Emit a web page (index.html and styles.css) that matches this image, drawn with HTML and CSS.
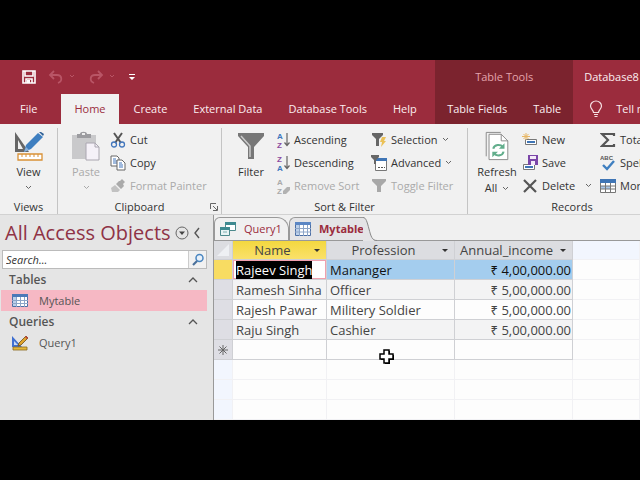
FILE: index.html
```html
<!DOCTYPE html>
<html lang="en">
<head>
    <meta charset="UTF-8">
    <meta name="viewport" content="width=device-width, initial-scale=1.0">
    <title>Database8</title>
    <link rel="stylesheet" href="styles.css">
</head>
<body>
    <div class="app">
        <header class="titlebar">
            <div class="title-main">
                <div class="quick-access">
                    <button class="qa-button" aria-label="Save"><svg width="14" height="14" viewBox="0 0 14 14"><path d="M1 1h12v12H1z M3 1v5h8V1 M4 13V9h6v4" fill="none" stroke="#fff" stroke-width="1.6"/><path d="M5 10h3v3H5z" fill="#fff"/></svg></button>
                    <button class="qa-button faded" aria-label="Undo"><svg width="28" height="14" viewBox="0 0 28 14"><path d="M6 1L2 5l4 4M2 5h7c5 0 6 6 1 8" fill="none" stroke="#b95566" stroke-width="1.8"/><path d="M22 5l2 2 2-2" fill="none" stroke="#b95566"/></svg></button>
                    <button class="qa-button faded" aria-label="Redo"><svg width="28" height="14" viewBox="0 0 28 14"><path d="M10 1l4 4-4 4M14 5H7C2 5 1 11 6 13" fill="none" stroke="#b95566" stroke-width="1.8"/><path d="M22 5l2 2 2-2" fill="none" stroke="#b95566"/></svg></button>
                    <button class="qa-button" aria-label="Customize"><svg width="8" height="8" viewBox="0 0 8 8"><path d="M1 1h6v1H1z M1 4h6L4 7z" fill="#fff"/></svg></button>
                </div>
                <nav class="tabs">
                    <button class="tab tab-file">File</button>
                    <button class="tab active">Home</button>
                    <button class="tab">Create</button>
                    <button class="tab">External Data</button>
                    <button class="tab">Database Tools</button>
                    <button class="tab">Help</button>
                </nav>
            </div>
            <div class="title-context">
                <div class="context-name">Table Tools</div>
                <nav class="tabs">
                    <button class="tab">Table Fields</button>
                    <button class="tab">Table</button>
                </nav>
            </div>
            <div class="title-end">
                <div class="file-name">Database8 : Database</div>
                <button class="tell-me">
                    <svg width="14" height="18" viewBox="0 0 14 18"><path d="M4.500 12.500C4.500 10 1.500 9 1.500 6a5.500 5 0 0 1 11 0c0 3-3 4-3 6.500z M5 14.500h4 M5.500 16.500h3" fill="none" stroke="#f6dfe2" stroke-width="1.200"/></svg>
                    Tell me what you want to do
                </button>
            </div>
        </header>

        <!-- ribbon -->
        <div class="ribbon">
            <section class="group group-views">
                <div class="group-body">
                    <button class="big">
                        <svg width="30" height="30" viewBox="0 0 30 30"><path d="M1 1v20h14z M4 9l5 9H4z" fill="#666" fill-rule="evenodd"/><path d="M10 21l2-7L24 2l5 4-12 12z" fill="#3f7fc0"/><path d="M25 1l4 4 1-2-3-2z" fill="#2d5f96"/><path d="M10 21l2-5 3 3z" fill="#8ab2dc"/><path d="M4 23h24v6H4z" fill="#fff" stroke="#d99136" stroke-width="1.300"/><path d="M8 23v3M12 23v3M16 23v3M20 23v3M24 23v3" stroke="#d99136"/></svg>
                        View
                        <svg class="chev" width="7" height="5" viewBox="0 0 7 5"><path d="M1 1l2.500 2.500L6 1"/></svg>
                    </button>
                </div>
                <div class="group-label">Views</div>
            </section>
            <section class="group group-clipboard">
                <div class="group-body">
                    <button class="big off">
                        <svg width="30" height="30" viewBox="0 0 30 30"><path d="M1 4h24v24H1z" fill="#c9c9cb"/><path d="M6 3h3c0-3 7-3 7 0h4v4H6z" fill="#9c9ca0"/><path d="M11 2h3v2h-3z" fill="#eee"/><path d="M15 12h9l4 4v13H15z" fill="#f5f1f8" stroke="#aaa6b0"/><path d="M24 12v4h4" fill="none" stroke="#aaa6b0"/></svg>
                        Paste
                        <svg class="chev" width="7" height="5" viewBox="0 0 7 5"><path d="M1 1l2.500 2.500L6 1"/></svg>
                    </button>
                    <div class="stack">
                        <button class="small"><svg width="16" height="16" viewBox="0 0 16 16"><path d="M4 1l7 10M12 1L5 11" stroke="#555" stroke-width="2"/><circle cx="4" cy="12.500" r="2.500" fill="none" stroke="#4377bd" stroke-width="1.300"/><circle cx="12" cy="12.500" r="2.500" fill="none" stroke="#4377bd" stroke-width="1.300"/></svg>Cut</button>
                        <button class="small"><svg width="16" height="16" viewBox="0 0 16 16"><path d="M1 1h6l2 2v8H1z" fill="#fff" stroke="#666"/><path d="M3 4h3M3 6h4M3 8h4" stroke="#4377bd"/><path d="M7 5h5l3 3v7H7z" fill="#fff" stroke="#666"/><path d="M9 8h3M9 10h4M9 12h4" stroke="#4377bd"/></svg>Copy</button>
                        <button class="small off"><svg width="16" height="16" viewBox="0 0 16 16"><path d="M10 3l2-2 3 3-2 2 1 2-3 3-5-5 3-3z" fill="#aaa"/><path d="M5 7l5 5-2 2-6 0-1-4z" fill="#c2c2c2"/></svg>Format Painter</button>
                    </div>
                </div>
                <div class="group-label">Clipboard
                    <button class="launcher" aria-label="Clipboard options"><svg width="8" height="8" viewBox="0 0 8 8"><path d="M.5 6V.5H6 M3 3l4 4 M7.500 3v4.500H3" fill="none" stroke="#666"/></svg></button>
                </div>
            </section>
            <section class="group group-sort">
                <div class="group-body">
                    <button class="big">
                        <svg width="28" height="30" viewBox="0 0 28 30"><path d="M1 2h26v3L17 16v12h-6V16L1 5z" fill="#777"/><path d="M4 5l9 10v11" fill="none" stroke="#ccc" stroke-width="1.500"/></svg>
                        Filter
                    </button>
                    <div class="stack">
                        <button class="small"><svg class="az" width="14" height="18" viewBox="0 0 14 18"><text x="1" y="8" fill="#3c76bd">A</text><text x="1" y="17" fill="#8a4aa0">Z</text><path d="M11 2v12M8.500 11.500l2.500 3 2.500-3" fill="none" stroke="#666" stroke-width="1.200"/></svg>Ascending</button>
                        <button class="small"><svg class="az" width="14" height="18" viewBox="0 0 14 18"><text x="1" y="8" fill="#8a4aa0">Z</text><text x="1" y="17" fill="#3c76bd">A</text><path d="M11 2v12M8.500 11.500l2.500 3 2.500-3" fill="none" stroke="#666" stroke-width="1.200"/></svg>Descending</button>
                        <button class="small off"><svg class="az" width="14" height="18" viewBox="0 0 14 18"><text x="1" y="8" fill="#aaa">A</text><text x="1" y="17" fill="#aaa">Z</text><path d="M7 14l4-4h3v3l-4 4H7z" fill="#b2b2b2"/></svg>Remove Sort</button>
                    </div>
                    <div class="stack">
                        <button class="small"><svg width="16" height="16" viewBox="0 0 16 16"><path d="M1 1h11v2L8 7v7H5V7L1 3z" fill="#666"/><path d="M11 5h4l-2 4h2l-5 6 1-5H9z" fill="#ebc157"/></svg>Selection<svg class="chev" width="7" height="5" viewBox="0 0 7 5"><path d="M1 1l2.500 2.500L6 1"/></svg></button>
                        <button class="small"><svg width="16" height="16" viewBox="0 0 16 16"><path d="M4.500 3.500h11v12h-11z" fill="#fff" stroke="#777"/><path d="M5 3h11v3H5z" fill="#3f75b5"/><path d="M7 12h2v1H7zM10 12h2v1h-2zM13 12h1v1h-1z" fill="#555"/><path d="M0 0h8v2L5 5v4H3V5L0 2z" fill="#666"/></svg>Advanced<svg class="chev" width="7" height="5" viewBox="0 0 7 5"><path d="M1 1l2.500 2.500L6 1"/></svg></button>
                        <button class="small off"><svg width="16" height="16" viewBox="0 0 16 16"><path d="M1 1h14v2l-5 5v6H6V8L1 3z" fill="#a8a8a8"/></svg>Toggle Filter</button>
                    </div>
                </div>
                <div class="group-label">Sort &amp; Filter</div>
            </section>
            <section class="group group-records">
                <div class="group-body">
                    <button class="big">
                        <svg width="26" height="32" viewBox="0 0 26 32"><path d="M1.500 27V1.500H17" fill="none" stroke="#888"/><path d="M4.500 3.500h13l7 7v20h-20z" fill="#fff" stroke="#888"/><path d="M17.500 3.500v7h7" fill="none" stroke="#888"/><path d="M9 19c1-5 8-5 10-2M20 22c-1 5-8 5-10 2" fill="none" stroke="#62ae8c" stroke-width="2.200"/><path d="M21 13v6h-6zM8 28v-6h6z" fill="#62ae8c"/></svg>
                        Refresh
                        <span class="big-line">All <svg class="chev" width="7" height="5" viewBox="0 0 7 5"><path d="M1 1l2.500 2.500L6 1"/></svg></span>
                    </button>
                    <div class="stack stack-records">
                        <button class="small"><svg width="16" height="16" viewBox="0 0 16 16"><path d="M3.500 7.500h11v5h-11z" fill="#fff" stroke="#777"/><path d="M5 9h8v2H5z" fill="#3f75b5"/><path d="M4 1v7M0 4.500h8M1.500 2l5 5M6.500 2l-5 5" stroke="#e8b765"/></svg>New</button>
                        <button class="small"><svg width="16" height="16" viewBox="0 0 16 16"><path d="M1.500 9.500h11v5h-11z" fill="#fff" stroke="#777"/><path d="M3 11h8v2H3z" fill="#3f75b5"/><path d="M6 0h10v10H6z" fill="#7b46a8"/><path d="M8 1h6v3H8zM9 6h4v4H9z" fill="#f3eaf8"/></svg>Save</button>
                        <button class="small"><svg width="16" height="16" viewBox="0 0 16 16"><path d="M2 2l12 12M14 2L2 14" stroke="#555" stroke-width="2.200"/></svg>Delete<svg class="chev chev-end" width="7" height="5" viewBox="0 0 7 5"><path d="M1 1l2.500 2.500L6 1"/></svg></button>
                    </div>
                    <div class="stack">
                        <button class="small"><svg width="16" height="16" viewBox="0 0 16 16"><path d="M14 4V2H2l6 6-6 6h12v-2" fill="none" stroke="#555" stroke-width="2.200"/></svg>Totals</button>
                        <button class="small"><svg class="abc" width="16" height="16" viewBox="0 0 16 16"><text x="0" y="5">ABC</text><path d="M3 10l4 4 7-8" fill="none" stroke="#3f7fc0" stroke-width="2.400"/></svg>Spelling</button>
                        <button class="small"><svg width="16" height="16" viewBox="0 0 16 16"><path d="M.5 1.500h15v13H.5z" fill="#fff" stroke="#777"/><path d="M0 1h16v4H0z" fill="#3f75b5"/><path d="M1 8h10v3H1z" fill="#a9c7e8"/><path d="M0 8h16M0 11h16M5.500 5v10M10.500 5v10" stroke="#777" fill="none"/></svg>More</button>
                    </div>
                </div>
                <div class="group-label">Records</div>
            </section>
        </div>

        <div class="workspace">
            <!-- navigation pane -->
            <aside class="nav-pane">
                <div class="nav-head">
                    <h1 class="nav-title">All Access Objects</h1>
                    <button class="icon-button" aria-label="Choose category"><svg width="14" height="14" viewBox="0 0 14 14"><circle cx="7" cy="7" r="6" fill="none" stroke="#666"/><path d="M4 5.500h6L7 9z" fill="#444"/></svg></button>
                    <button class="icon-button" aria-label="Collapse pane"><svg width="8" height="12" viewBox="0 0 8 12"><path d="M6 1L2 6l4 5" fill="none" stroke="#555" stroke-width="1.400"/></svg></button>
                </div>
                <div class="search">
                    <input class="search-input" type="text" placeholder="Search..." aria-label="Search">
                    <button class="search-button" aria-label="Find"><svg width="14" height="14" viewBox="0 0 14 14"><circle cx="8.500" cy="5" r="3.500" fill="#e8f1fa" stroke="#4a86c0" stroke-width="1.500"/><path d="M6 8l-4 4" stroke="#4a6f9a" stroke-width="2.200"/></svg></button>
                </div>
                <button class="nav-group">Tables<svg width="10" height="6" viewBox="0 0 10 6"><path d="M1 5l4-4 4 4" fill="none" stroke="#555" stroke-width="1.300"/></svg></button>
                <a class="nav-item selected" href="#mytable"><svg width="16" height="13" viewBox="0 0 16 13"><path d="M.5.5h15v12H.5z" fill="#fff" stroke="#4c6fa5"/><path d="M0 0h16v3H0z" fill="#4c79b8"/><path d="M1 3h3v9H1z" fill="#bcd0ea"/><path d="M0 6.500h16M0 9.500h16M4.500 3v10M8.500 3v10M12.500 3v10" stroke="#8ca5c8"/></svg>Mytable</a>
                <button class="nav-group">Queries<svg width="10" height="6" viewBox="0 0 10 6"><path d="M1 5l4-4 4 4" fill="none" stroke="#555" stroke-width="1.300"/></svg></button>
                <a class="nav-item" href="#query1"><svg width="18" height="16" viewBox="0 0 18 16"><path d="M1 1v11h10z" fill="#3f6fd0"/><path d="M3 6v4h4z" fill="#c9daf5"/><path d="M2 12h14v3H2z" fill="#e4b73c" stroke="#8a6a20" stroke-width=".8"/><path d="M7 11l1-3 7-7 2 2-7 7z" fill="#e0a42e" stroke="#6b4f1a" stroke-width=".8"/><path d="M14 2l1-1 2 2-1 1z" fill="#c03c3c"/></svg>Query1</a>
            </aside>

            <main class="document">
                <div class="doc-tabs">
                    <button class="doc-tab"><svg width="16" height="16" viewBox="0 0 16 16"><path d="M5.500 1.500h10v8h-10z" fill="#fff" stroke="#4d8a8c"/><path d="M5 1h11v3H5z" fill="#3f8a90"/><path d="M.5 6.500h9v8h-9z" fill="#e8f4f4" stroke="#4d8a8c"/><path d="M0 6h10v3H0z" fill="#3f8a90"/><path d="M3 11h4" stroke="#7fb0b0"/></svg>Query1</button>
                    <button class="doc-tab current"><svg width="16" height="14" viewBox="0 0 16 14"><path d="M.5.500h15v13H.5z" fill="#fff" stroke="#4c6fa5"/><path d="M0 0h16v3H0z" fill="#5b86c4"/><path d="M1 3h3v10H1z" fill="#bcd0ea"/><path d="M0 6.500h16M0 10h16M4.500 3v11M8.500 3v11M12.500 3v11" stroke="#8ca5c8"/></svg>Mytable<svg class="slant" width="14" height="24" viewBox="0 0 14 24"><path d="M0 0c3 0 4 4 6 12s3 12 8 12H0z" fill="#e4e4e6"/><path d="M0 .5c3 0 4 4 6 11.500s3 11.500 8 11.500" fill="none" stroke="#888"/></svg></button>
                </div>
                <table class="sheet" id="mytable">
                    <colgroup>
                        <col class="col-mark"><col class="col-name"><col class="col-job"><col class="col-income"><col>
                    </colgroup>
                    <thead>
                        <tr>
                            <th class="corner"><svg width="12" height="12" viewBox="0 0 12 12"><path d="M12 0v12H0z" fill="#eef0f3"/></svg></th>
                            <th class="sorted"><div class="head-cell"><span>Name</span><i class="arrow"></i></div></th>
                            <th><div class="head-cell"><span>Profession</span><i class="arrow"></i></div></th>
                            <th><div class="head-cell"><span>Annual_income</span><i class="arrow"></i></div></th>
                            <th class="blank"></th>
                        </tr>
                    </thead>
                    <tbody>
                        <tr class="active-row"><td class="mark"></td><td class="editing"><mark>Rajeev Singh</mark></td><td>Mananger</td><td class="money">₹ 4,00,000.00</td><td class="blank"></td></tr>
                        <tr class="alt"><td class="mark"></td><td>Ramesh Sinha</td><td>Officer</td><td class="money">₹ 5,00,000.00</td><td class="blank"></td></tr>
                        <tr><td class="mark"></td><td>Rajesh Pawar</td><td>Militery Soldier</td><td class="money">₹ 5,00,000.00</td><td class="blank"></td></tr>
                        <tr class="alt"><td class="mark"></td><td>Raju Singh</td><td>Cashier</td><td class="money">₹ 5,00,000.00</td><td class="blank"></td></tr>
                        <tr><td class="mark"><svg width="10" height="10" viewBox="0 0 10 10"><path d="M5 0v10M0 5h10M1.500 1.500l7 7M8.500 1.500l-7 7" stroke="#666"/></svg></td><td></td><td></td><td></td><td class="blank"></td></tr>
                    </tbody>
                    <tbody class="empty">
                        <tr><td></td><td></td><td></td><td></td><td></td></tr>
                        <tr><td></td><td></td><td></td><td></td><td></td></tr>
                        <tr><td></td><td></td><td></td><td></td><td></td></tr>
                        <tr><td></td><td></td><td></td><td></td><td></td></tr>
                    </tbody>
                </table>
                <svg class="pointer" width="16" height="16" viewBox="0 0 16 16"><path d="M6 2h5v4h4v5h-4v4H6v-4H2V6h4z" fill="#000"/><path d="M5 1h5v4h4v5h-4v4H5v-4H1V5h4z" fill="#fff" stroke="#000" stroke-width="1.500"/></svg>
            </main>
        </div>
    </div>
</body>
</html>
```
FILE: styles.css
```css
* {
    box-sizing: border-box;
}

body {
    margin: 0;
    padding: 60px 0;
    height: 100vh;
    background: #000;
    color: #444;
    font-family: "Open Sans", "Noto Sans", sans-serif;
    font-size: 11px;
    line-height: 16px;
    overflow: hidden;
}

button {
    border: 0;
    padding: 0;
    background: none;
    color: inherit;
    font: inherit;
    white-space: nowrap;
}

svg {
    flex: none;
}

.app {
    display: flex;
    flex-direction: column;
    height: 100%;
    overflow: hidden;
    background: #f1f1f1;
}

/* title bar */
.titlebar {
    display: flex;
    background: #9b2c3d;
    color: #fbeef0;
}

.title-main {
    flex: 0 0 68%;
}

.quick-access {
    display: flex;
    align-items: center;
    gap: 12px;
    height: 34px;
    padding-left: 22px;
}

.qa-button {
    display: flex;
}

.tabs {
    display: flex;
}

.tab {
    height: 30px;
    padding: 0 13px;
}

.tab-file {
    padding: 0 24px 0 20px;
}

.tab.active {
    margin-right: 2px;
    background: #f1f1f1;
    color: #9b2c3d;
}

.title-context {
    background: #7b232e;
    flex: 0 0 138px;
}

.context-name {
    height: 34px;
    line-height: 34px;
    text-align: center;
    color: #e3a3ac;
}

.title-context .tab {
    padding: 0 12px;
}

.title-context .tab + .tab {
    padding-left: 14px;
}

.title-end {
    flex: 1;
    min-width: 0;
    overflow: hidden;
    padding-left: 11px;
    white-space: nowrap;
}

.file-name {
    height: 34px;
    line-height: 34px;
}

.tell-me {
    display: flex;
    align-items: center;
    gap: 13px;
    height: 30px;
    padding-left: 5px;
}

/* ribbon */
.ribbon {
    display: flex;
    flex: none;
    overflow: hidden;
    padding-top: 4px;
    border-bottom: 1px solid #d2d2d2;
}

.group {
    display: flex;
    flex: none;
    flex-direction: column;
    border-right: 1px solid #c4c4c4;
}

.group-views {
    width: 58px;
}

.group-clipboard {
    width: 164px;
}

.group-sort {
    width: 246px;
}

.group-records {
    width: 208px;
    border-right: 0;
}

.group-body {
    display: flex;
    height: 72px;
}

.group-label {
    position: relative;
    height: 14px;
    line-height: 14px;
    text-align: center;
    color: #333;
}

.launcher {
    position: absolute;
    right: 3px;
    bottom: 3px;
}

.launcher svg {
    display: block;
}

.big {
    display: flex;
    flex-direction: column;
    align-items: center;
    width: 58px;
    padding-top: 3px;
    color: #333;
}

.big > svg:first-child {
    margin-bottom: 3px;
}

.big > .chev {
    margin-top: 5px;
}

.chev {
    fill: none;
    stroke: #666;
}

.big-line {
    display: flex;
    align-items: center;
    gap: 5px;
}

.stack {
    display: flex;
    flex-direction: column;
    padding-left: 5px;
}

.stack + .stack {
    padding-left: 8px;
}

.small {
    display: flex;
    align-items: center;
    gap: 4px;
    height: 23px;
    color: #333;
}

.off {
    color: #aaa;
}

.off .chev {
    stroke: #aaa;
}

.big + .stack {
    padding-left: 0;
}

.group-clipboard .big {
    width: 52px;
    padding-left: 4px;
}

.group-clipboard .stack {
    flex: 1;
}

.group-sort .big {
    width: 54px;
    padding-left: 4px;
}

.group-sort .big + .stack {
    width: 87px;
}

.group-records .big {
    width: 54px;
    padding-left: 4px;
}

.group-records .big > svg:first-child {
    height: 30px;
}

.stack-records {
    width: 70px;
}

.chev-end {
    margin-left: auto;
}

.az text {
    font: 700 8px "Liberation Sans", sans-serif;
}

.abc text {
    font: 700 6px "Liberation Sans", sans-serif;
    fill: #555;
}

/* panes */
.workspace {
    display: flex;
    flex: 1;
    min-height: 0;
}

.nav-pane {
    flex: 0 0 214px;
    padding-right: 6px;
    background: #e5e5e5;
    border-right: 1px solid #999;
}

.nav-head {
    display: flex;
    align-items: center;
    gap: 4px;
    height: 35px;
    padding-left: 5px;
}

.nav-title {
    margin: 0;
    font-size: 20px;
    font-weight: 400;
    line-height: 35px;
    color: #8f3346;
    white-space: nowrap;
}

.icon-button {
    display: flex;
}

.search {
    display: flex;
    height: 19px;
    margin-left: 2px;
    border: 1px solid #bbb;
    background: #fff;
}

.search-input {
    flex: 1;
    min-width: 0;
    padding: 0 3px;
    border: 0;
    background: none;
    font: italic 11px "Open Sans", sans-serif;
}

.search-input::placeholder {
    color: #333;
}

.search-button {
    display: flex;
    align-items: center;
    justify-content: center;
    width: 18px;
    border-left: 1px solid #ccc;
    background: #f1f1f1;
}

.nav-group {
    display: flex;
    align-items: center;
    justify-content: space-between;
    width: 100%;
    height: 21px;
    padding: 0 9px;
    font-size: 12px;
    font-weight: 600;
    color: #555;
}

.nav-item {
    display: flex;
    align-items: center;
    gap: 10px;
    height: 21px;
    margin-left: 1px;
    padding-left: 10px;
    color: #555;
    text-decoration: none;
}

.nav-item svg {
    width: 18px;
}

.nav-item.selected {
    background: #f6b8c4;
}

.document {
    position: relative;
    flex: 1;
    min-width: 0;
    overflow: hidden;
    background: #fdfdfd;
}

.doc-tabs {
    display: flex;
    height: 26px;
    padding-top: 2px;
    background: #f0f0f0;
    border-bottom: 1px solid #999;
}

.doc-tab {
    display: flex;
    align-items: center;
    gap: 8px;
    width: 75px;
    padding-left: 5px;
    border: 1px solid #999;
    border-bottom: 0;
    border-radius: 6px 12px 0 0;
    color: #9b2c3d;
}

.doc-tab.current {
    position: relative;
    width: 74px;
    border-right: 0;
    border-radius: 6px 0 0 0;
    background: #e4e4e6;
    font-weight: 700;
}

.slant {
    position: absolute;
    left: 100%;
    top: -1px;
}

/* datasheet */
.sheet {
    width: 100%;
    table-layout: fixed;
    border-collapse: separate;
    border-spacing: 0;
    font-size: 13px;
    line-height: 18px;
}

.col-mark {
    width: 19px;
}

.col-name {
    width: 94px;
}

.col-job {
    width: 128px;
}

.col-income {
    width: 118px;
}

.sheet th,
.sheet td {
    height: 20px;
    padding: 0 0 0 3px;
    border-right: 1px solid #cfd0d4;
    border-bottom: 1px solid #cfd0d4;
    white-space: nowrap;
}

.sheet th {
    height: 19px;
    padding-left: 0;
    background: #dcdde1;
    font-weight: 400;
}

.sheet th.sorted {
    background: linear-gradient(#f3d83f, #fae16a);
}

.corner svg,
.mark svg {
    display: block;
    margin: auto;
}

.head-cell {
    display: flex;
    align-items: center;
}

.head-cell span {
    flex: 1;
    padding-right: 2px;
}

.arrow {
    margin-right: 6px;
    border: 3px solid transparent;
    border-top-color: #333;
    border-bottom: 0;
}

.sheet .mark {
    padding: 0;
    background: #dedee4;
}

.active-row td {
    background: #a4cdee;
    color: #111;
}

.sheet .active-row .mark {
    background: #f8dc62;
}

.sheet .editing {
    background: #fff;
    box-shadow: inset 0 0 0 1px #f0a0ae;
}

.editing mark {
    background: #000;
    color: #fff;
}

.alt td {
    background: #f3f3f4;
}

.sheet .money {
    padding-right: 1px;
    text-align: right;
}

.sheet td.blank,
.sheet th.blank,
.sheet .empty td {
    background: #fdfdfd;
    border-color: #f1f1f4;
}

.sheet th.blank,
.sheet .empty td:first-child {
    background: #f2f6fe;
}

.pointer {
    position: absolute;
    left: 165px;
    top: 134px;
}
```
